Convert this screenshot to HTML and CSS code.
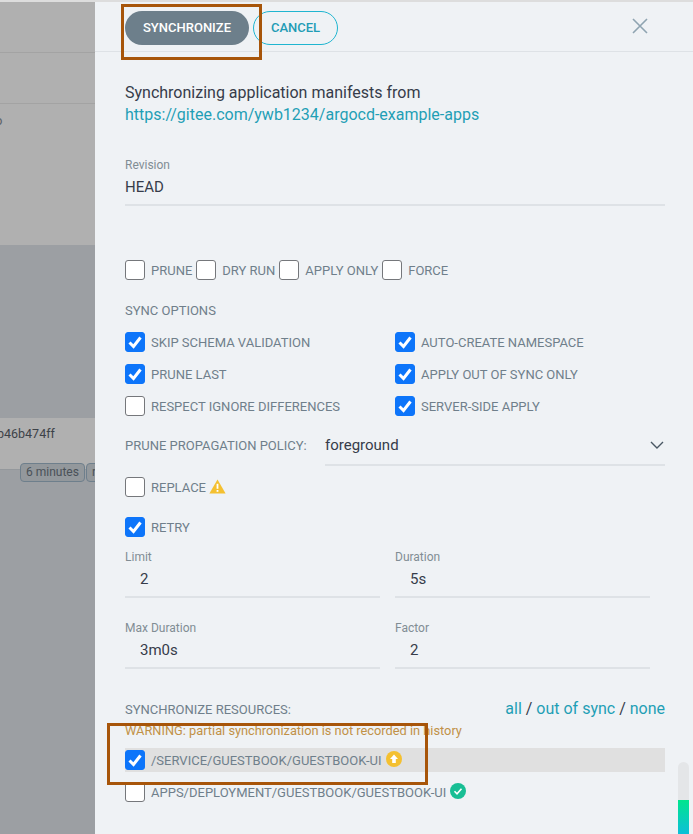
FILE: index.html
```html
<!DOCTYPE html>
<html lang="en">
<head>
<meta charset="utf-8">
<title>Sync</title>
<link rel="stylesheet" href="styles.css">
</head>
<body>
<div class="screen">
  <aside class="backdrop">
    <div class="bd-top"><div class="bd-cell"></div><div class="bd-cell"></div><div class="bd-cell grow"><span class="bd-frag">o</span></div></div>
    <div class="bd-gap"></div>
    <div class="bd-row"><span class="bd-hash">b46b474ff</span></div>
    <div class="bd-tags"><span class="tag">6 minutes</span><span class="tag">r</span></div>
  </aside>
  <main class="panel">
    <header class="head">
      <button class="btn primary">SYNCHRONIZE</button>
      <button class="btn outline">CANCEL</button>
      <svg class="close" width="16" height="16" viewBox="0 0 16 16"><path d="M1 1L15 15M15 1L1 15" stroke="#8fa4b1" stroke-width="1.6" fill="none"/></svg>
    </header>
    <div class="body">
      <p class="intro">Synchronizing application manifests from<br><a class="link">https://gitee.com/ywb1234/argocd-example-apps</a></p>
      <div class="field revision"><label class="flabel">Revision</label><div class="fvalue">HEAD</div></div>
      <div class="modes">
        <label class="check"><span class="box"></span>PRUNE</label>
        <label class="check"><span class="box"></span>DRY RUN</label>
        <label class="check"><span class="box"></span>APPLY ONLY</label>
        <label class="check"><span class="box"></span>FORCE</label>
      </div>
      <div class="section-title">SYNC OPTIONS</div>
      <div class="opts">
        <label class="check"><span class="box on"><svg viewBox="0 0 20 20"><path d="M4.5 10.5L8.5 14.5L15.5 5.5" /></svg></span>SKIP SCHEMA VALIDATION</label>
        <label class="check"><span class="box on"><svg viewBox="0 0 20 20"><path d="M4.5 10.5L8.5 14.5L15.5 5.5" /></svg></span>AUTO-CREATE NAMESPACE</label>
        <label class="check"><span class="box on"><svg viewBox="0 0 20 20"><path d="M4.5 10.5L8.5 14.5L15.5 5.5" /></svg></span>PRUNE LAST</label>
        <label class="check"><span class="box on"><svg viewBox="0 0 20 20"><path d="M4.5 10.5L8.5 14.5L15.5 5.5" /></svg></span>APPLY OUT OF SYNC ONLY</label>
        <label class="check"><span class="box"></span>RESPECT IGNORE DIFFERENCES</label>
        <label class="check"><span class="box on"><svg viewBox="0 0 20 20"><path d="M4.5 10.5L8.5 14.5L15.5 5.5" /></svg></span>SERVER-SIDE APPLY</label>
      </div>
      <div class="policy">
        <span class="policy-label">PRUNE PROPAGATION POLICY:</span>
        <div class="select"><span>foreground</span><svg width="14" height="8" viewBox="0 0 14 8"><path d="M1 1L7 7L13 1" fill="none" stroke="#495763" stroke-width="1.4"/></svg></div>
      </div>
      <div class="single replace"><label class="check"><span class="box"></span>REPLACE<svg class="warn" width="17" height="15" viewBox="0 0 17 15"><path d="M8.5 0.5L16.6 14.5H0.4Z" fill="#f4c030"/><rect x="7.6" y="4.8" width="1.8" height="5" fill="#fff"/><rect x="7.6" y="11" width="1.8" height="1.8" fill="#fff"/></svg></label></div>
      <div class="single retry"><label class="check"><span class="box on"><svg viewBox="0 0 20 20"><path d="M4.5 10.5L8.5 14.5L15.5 5.5" /></svg></span>RETRY</label></div>
      <div class="retry-grid">
        <div class="rfield"><label class="flabel">Limit</label><div class="rvalue">2</div></div>
        <div class="rfield"><label class="flabel">Duration</label><div class="rvalue">5s</div></div>
        <div class="rfield"><label class="flabel">Max Duration</label><div class="rvalue">3m0s</div></div>
        <div class="rfield"><label class="flabel">Factor</label><div class="rvalue">2</div></div>
      </div>
      <div class="res-head"><span class="section-inline">SYNCHRONIZE RESOURCES:</span><span class="res-links"><a class="link">all</a> / <a class="link">out of sync</a> / <a class="link">none</a></span></div>
      <div class="warning">WARNING: partial synchronization is not recorded in history</div>
      <div class="res selected"><label class="check"><span class="box on"><svg viewBox="0 0 20 20"><path d="M4.5 10.5L8.5 14.5L15.5 5.5" /></svg></span>/SERVICE/GUESTBOOK/GUESTBOOK-UI<svg class="status" width="16" height="16" viewBox="0 0 16 16"><circle cx="8" cy="8" r="8" fill="#f4c030"/><path d="M8 3.5L12 8H9.8V12H6.2V8H4Z" fill="#fff"/></svg></label></div>
      <div class="res"><label class="check"><span class="box"></span>APPS/DEPLOYMENT/GUESTBOOK/GUESTBOOK-UI<svg class="status" width="16" height="16" viewBox="0 0 16 16"><circle cx="8" cy="8" r="8" fill="#18be94"/><path d="M4.5 8.3L7 10.8L11.5 5.8" fill="none" stroke="#fff" stroke-width="1.6"/></svg></label></div>
    </div>
    <div class="mark mark-top"></div>
    <div class="mark mark-res"></div>
    <div class="scroll"><div class="thumb"></div></div>
  </main>
</div>
</body>
</html>
```
FILE: styles.css
```css
* { box-sizing: border-box; }
html, body { margin: 0; height: 100%; overflow: hidden; }
body { font-family: Roboto, "Liberation Sans", sans-serif; background: #eff2f5; }
.screen { display: flex; height: 834px; width: 693px; padding-top: 2px; background: linear-gradient(#ddd 2px, transparent 2px); }

.backdrop { width: 95px; flex: none; background: #9c9fa3; display: flex; flex-direction: column; }
.bd-top { height: 243px; background: #b0b0b0; display: flex; flex-direction: column; }
.bd-cell { height: 51px; border-bottom: 1px solid #a3a3a3; }
.bd-cell.grow { flex: 1; border-bottom: 0; position: relative; font-size: 13px; color: #5c6268; overflow: hidden; }
.bd-frag { position: absolute; left: -5px; top: 9px; }
.bd-gap { height: 173px; }
.bd-row { height: 52px; background: #b0b0b0; border-bottom: 1px solid #94989c; padding-top: 7px; font-size: 12.5px; line-height: 18px; color: #3d4248; white-space: nowrap; overflow: hidden; }
.bd-hash { margin-left: -3px; }
.bd-tags { display: flex; gap: 1px; margin-top: -7px; margin-left: 20px; white-space: nowrap; overflow: hidden; }
.tag { height: 19px; border: 1px solid #6e7f8c; border-radius: 4px; background: #93989c; color: #4a5158; font-size: 12px; line-height: 17px; padding: 0 5px; }

.panel { flex: 1; position: relative; background: #eff2f5; color: #495763; overflow: hidden; }
.head { height: 50px; border-bottom: 1px solid #dee2e6; display: flex; align-items: flex-start; padding: 9px 0 0 30px; gap: 4px; position: relative; }
.btn { height: 34px; border-radius: 17px; font: 500 13px Roboto, sans-serif; padding: 0 0 2px; }
.primary { width: 124px; background: #6d7f8b; color: #fff; border: 0; }
.outline { width: 85px; background: transparent; color: #1f9cb5; border: 1px solid #1fb5d0; }
.close { position: absolute; left: 537px; top: 16px; }

.body { padding: 0 28px 0 30px; }
.intro { margin: 30px 0 0; font-size: 16px; line-height: 22px; color: #363c4a; }
.link { color: #1f9fb5; }
.flabel { display: block; font-size: 12px; line-height: 14px; color: #818d94; }
.revision { margin-top: 32px; height: 48px; border-bottom: 2px solid #dee2e6; }
.fvalue { font-size: 15px; line-height: 18px; margin-top: 6px; color: #363c4a; }

.check { display: flex; align-items: center; font-size: 13px; color: #6f7f8b; white-space: nowrap; }
.box { width: 20px; height: 20px; flex: none; margin-right: 6px; border: 1px solid #75777b; border-radius: 3px; background: #fff; display: flex; }
.box.on { background: #0d75fa; border-color: #0d75fa; }
.box svg { width: 20px; height: 20px; margin: -1px; flex: none; }
.box svg path { fill: none; stroke: #fff; stroke-width: 3; }

.modes { display: flex; gap: 4px; margin-top: 54px; height: 20px; }
.section-title { margin-top: 23px; font-size: 13px; line-height: 16px; color: #6f7f8b; }
.opts { display: grid; grid-template-columns: 270px 1fr; row-gap: 12px; margin-top: 13px; }

.policy { display: flex; margin-top: 12px; align-items: flex-start; }
.policy-label { font-size: 13px; line-height: 16px; margin-top: 10px; color: #6f7f8b; width: 200px; flex: none; }
.select { flex: 1; height: 38px; border-bottom: 2px solid #dee2e6; display: flex; justify-content: space-between; align-items: center; padding: 0 1px 2px 0; font-size: 15px; color: #363c4a; }
.replace { margin-top: 11px; }
.retry { margin-top: 20px; }
.warn { margin-left: 3px; position: relative; top: -1px; }

.retry-grid { display: grid; grid-template-columns: 255px 255px; column-gap: 15px; row-gap: 19px; margin-top: 9px; width: 525px; }
.rfield { height: 52px; border-bottom: 2px solid #dee2e6; }
.rfield .flabel { margin-top: 4px; }
.rvalue { font-size: 15px; line-height: 18px; margin-top: 6px; padding-left: 15px; color: #363c4a; }

.res-head { display: flex; justify-content: space-between; align-items: flex-end; margin-top: 28px; height: 20px; }
.section-inline { font-size: 13px; color: #6f7f8b; }
.res-links { font-size: 16px; line-height: 16px; color: #363c4a; }
.warning { font-size: 12.8px; line-height: 16px; margin-top: 6px; color: #c19147; }
.res { height: 24px; margin-top: 8px; display: flex; align-items: center; }
.res.selected { background: #e0e0e0; margin-top: 9px; }
.status { margin-left: 4px; position: relative; top: -1px; }

.mark { position: absolute; border: 3px solid #a7550a; pointer-events: none; }
.mark-top { left: 26px; top: 2px; width: 141px; height: 56px; }
.mark-res { left: 12px; top: 721px; width: 321px; height: 62px; }

.scroll { position: absolute; right: 4px; top: 760px; width: 11px; height: 72px; border-radius: 6px 6px 0 0; background: #e4e6e8; overflow: hidden; }
.thumb { margin-top: 38px; height: 34px; background: linear-gradient(#00e58e, #0dbfd8); }
```
